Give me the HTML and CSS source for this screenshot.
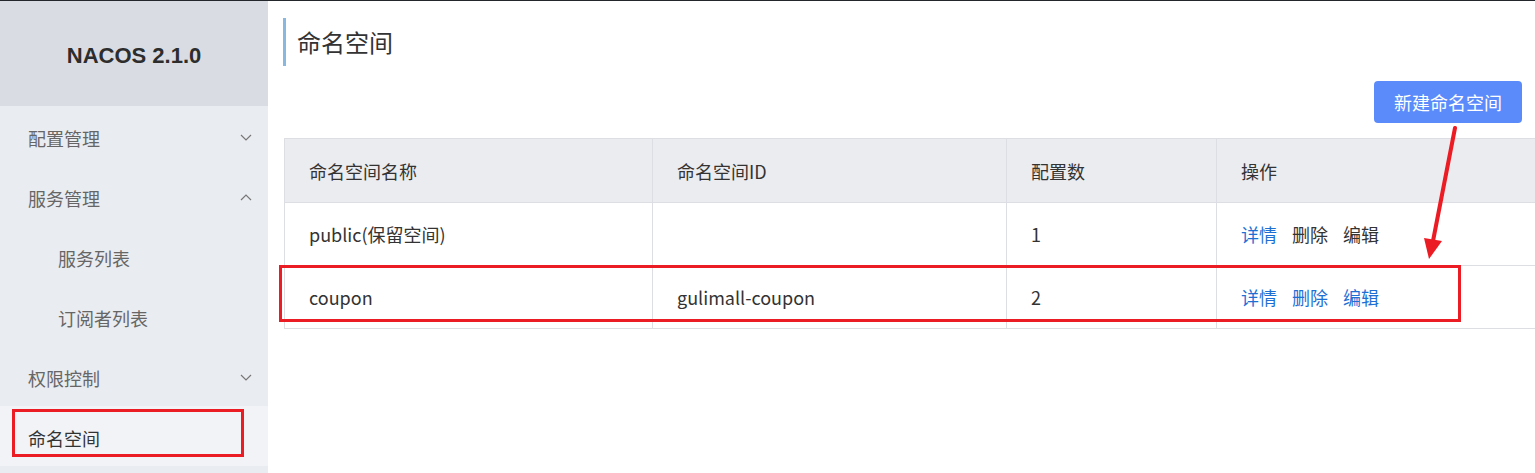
FILE: index.html
```html
<!DOCTYPE html>
<html lang="zh-CN">
<head>
<meta charset="utf-8">
<title>命名空间 - NACOS</title>
<link rel="stylesheet" href="styles.css">
</head>
<body>
<div class="app">
  <aside class="sidebar">
    <div class="brand">NACOS 2.1.0</div>
    <ul class="menu">
      <li class="menu-item">配置管理
        <svg class="chev" width="12" height="7" viewBox="0 0 12 7"><polyline points="1,1 6,6 11,1" fill="none" stroke="#777" stroke-width="1.2"/></svg>
      </li>
      <li class="menu-item">服务管理
        <svg class="chev" width="12" height="7" viewBox="0 0 12 7"><polyline points="1,6 6,1 11,6" fill="none" stroke="#777" stroke-width="1.2"/></svg>
      </li>
      <li class="menu-item sub">服务列表</li>
      <li class="menu-item sub">订阅者列表</li>
      <li class="menu-item">权限控制
        <svg class="chev" width="12" height="7" viewBox="0 0 12 7"><polyline points="1,1 6,6 11,1" fill="none" stroke="#777" stroke-width="1.2"/></svg>
      </li>
      <li class="menu-item active">命名空间
        <span class="mark mark-side"></span>
      </li>
    </ul>
  </aside>
  <main class="main">
    <h1 class="page-title">命名空间</h1>
    <button class="btn-primary">新建命名空间</button>
    <div class="table-wrap">
      <table class="ns-table">
        <colgroup>
          <col class="c1"><col class="c2"><col class="c3"><col class="c4">
        </colgroup>
        <thead>
          <tr><th>命名空间名称</th><th>命名空间ID</th><th>配置数</th><th>操作</th></tr>
        </thead>
        <tbody>
          <tr>
            <td>public(保留空间)</td><td></td><td>1</td>
            <td><div class="ops"><a class="link">详情</a><span class="disabled">删除</span><span class="disabled">编辑</span></div></td>
          </tr>
          <tr>
            <td>coupon</td><td>gulimall-coupon</td><td>2</td>
            <td><div class="ops"><a class="link">详情</a><a class="link">删除</a><a class="link">编辑</a></div></td>
          </tr>
        </tbody>
      </table>
      <span class="mark mark-row"></span>
    </div>
    <svg class="arrow" width="40" height="140" viewBox="0 0 40 140">
      <line x1="32" y1="2" x2="10" y2="115" stroke="#ec1c24" stroke-width="4" stroke-linecap="round"/>
      <polygon points="1,112 19,115 6,133" fill="#ec1c24"/>
    </svg>
  </main>
</div>
</body>
</html>
```
FILE: styles.css
```css
* { box-sizing: border-box; }
html, body { margin: 0; padding: 0; }
body {
  font-family: "Open Sans", "Noto Sans CJK SC", sans-serif;
  color: #333;
  background: #fff;
  overflow: hidden;
}
.app {
  display: flex;
  height: 473px;
  border-top: 1px solid #23262b;
}
.sidebar {
  width: 268px;
  flex: none;
  background: #e9ecf0;
}
.brand {
  height: 105px;
  background: #d9dde3;
  display: flex;
  align-items: center;
  justify-content: center;
  font-family: "Liberation Sans", "Noto Sans CJK SC", sans-serif;
  font-weight: bold;
  font-size: 22px;
  color: #2d2d2d;
  padding-top: 4px;
}
.menu {
  list-style: none;
  margin: 0;
  padding: 0;
}
.menu-item {
  position: relative;
  height: 60px;
  display: flex;
  align-items: center;
  justify-content: space-between;
  padding: 4px 16px 0 28px;
  font-family: "Noto Sans CJK SC", sans-serif;
  font-size: 18px;
  color: #666;
}
.menu-item.sub { padding-left: 58px; }
.menu-item.active {
  background: #f2f3f7;
  color: #333;
}
.chev { margin-top: -2px; }
.main {
  position: relative;
  flex: 1;
  min-width: 0;
  display: flex;
  flex-direction: column;
  padding: 17px 0 0 15px;
}
.page-title {
  margin: 0;
  height: 48px;
  border-left: 3px solid #88b7e0;
  padding-left: 11px;
  font-family: "Noto Sans CJK SC", sans-serif;
  font-size: 24px;
  font-weight: normal;
  line-height: 48px;
  color: #333;
}
.btn-primary {
  align-self: flex-end;
  margin: 15px 13px 0 0;
  height: 42px;
  padding: 0 20px;
  border: none;
  border-radius: 4px;
  background: #5b8bfa;
  color: #fff;
  font-family: "Noto Sans CJK SC", sans-serif;
  font-size: 18px;
}
.table-wrap {
  position: relative;
  margin-top: 15px;
  margin-left: 1px;
  margin-right: -10px;
}
.ns-table {
  width: 100%;
  border-collapse: collapse;
  table-layout: fixed;
  font-family: "Noto Sans CJK SC", sans-serif;
  font-size: 18px;
}
.c1 { width: 368px; }
.c2 { width: 354px; }
.c3 { width: 210px; }
.ns-table th, .ns-table td {
  border: 1px solid #dcdee3;
  border-right: none;
  padding: 0 0 0 24px;
  text-align: left;
  font-weight: normal;
  color: #333;
}
.ns-table th:not(:first-child), .ns-table td:not(:first-child) { border-left: 1px solid #dcdee3; }
.ns-table th {
  height: 64px;
  background: #ebecf0;
}
.ns-table td { height: 63px; }
.ops { display: flex; gap: 15px; }
.link { color: #1e6fd4; cursor: pointer; }
.disabled { color: #333; }
.mark {
  position: absolute;
  border: 3px solid #ec1c24;
  pointer-events: none;
}
.mark-side {
  left: 12px;
  top: 3px;
  width: 232px;
  height: 48px;
}
.mark-row {
  left: -5px;
  top: 127px;
  width: 1182px;
  height: 57px;
}
.arrow {
  position: absolute;
  left: 1155px;
  top: 125px;
}
```
